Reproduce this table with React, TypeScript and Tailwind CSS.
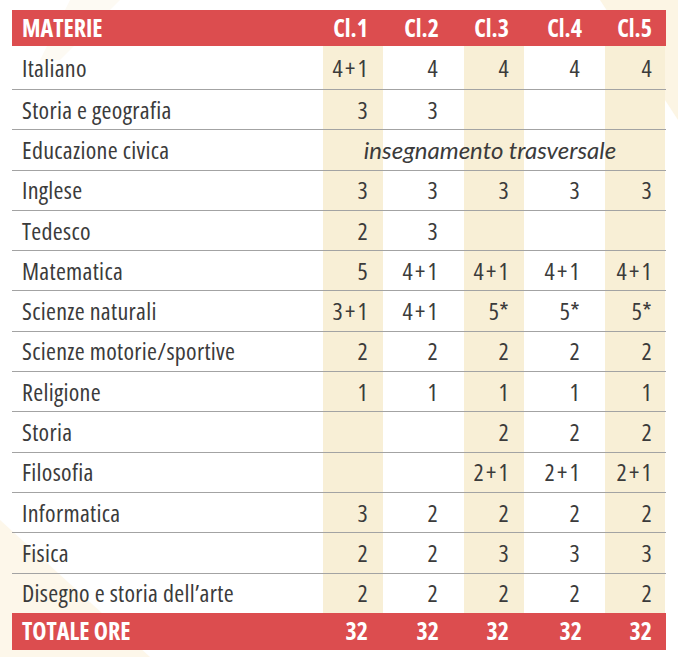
import React from "react";

type Row = { name: string; values: string[]; note?: string };

const rows: Row[] = [
  { name: "Italiano", values: ["4+1", "4", "4", "4", "4"] },
  { name: "Storia e geografia", values: ["3", "3", "", "", ""] },
  { name: "Educazione civica", values: ["", "", "", "", ""], note: "insegnamento trasversale" },
  { name: "Inglese", values: ["3", "3", "3", "3", "3"] },
  { name: "Tedesco", values: ["2", "3", "", "", ""] },
  { name: "Matematica", values: ["5", "4+1", "4+1", "4+1", "4+1"] },
  { name: "Scienze naturali", values: ["3+1", "4+1", "5*", "5*", "5*"] },
  { name: "Scienze motorie/sportive", values: ["2", "2", "2", "2", "2"] },
  { name: "Religione", values: ["1", "1", "1", "1", "1"] },
  { name: "Storia", values: ["", "", "2", "2", "2"] },
  { name: "Filosofia", values: ["", "", "2+1", "2+1", "2+1"] },
  { name: "Informatica", values: ["3", "2", "2", "2", "2"] },
  { name: "Fisica", values: ["2", "2", "3", "3", "3"] },
  { name: "Disegno e storia dell\u2019arte", values: ["2", "2", "2", "2", "2"] },
];

const cols = ["Cl.1", "Cl.2", "Cl.3", "Cl.4", "Cl.5"];

// beige on odd classes, right padding tuned per column
const cellClass = [
  "bg-[#f8efd6] pr-[15px]",
  "pr-[26px]",
  "bg-[#f8efd6] pr-[15px]",
  "pr-[25px]",
  "bg-[#f8efd6] pr-[13px]",
];
const headPad = ["pr-[15px]", "pr-[25px]", "pr-[15px]", "pr-[23px]", "pr-[13px]"];

const grid = "grid grid-cols-[311px_60px_81px_60px_81px_60px]";

function Hours({ v }: { v: string }) {
  const [a, b] = v.split("+");
  if (b === undefined) return <span>{v}</span>;
  return (
    <span>
      {a}
      <span className="mx-[2px]">+</span>
      {b}
    </span>
  );
}

export default function App() {
  return (
    <div
      className="relative h-[657px] w-[678px] overflow-hidden bg-white text-[#3b3b3b] [font-stretch:condensed]"
      style={{ fontFamily: '"Open Sans", "DejaVu Sans Condensed", sans-serif' }}
    >
      <svg className="absolute inset-0 h-full w-full" viewBox="0 0 678 657">
        <polygon points="600,0 678,0 678,120" fill="#fcf5e4" />
        <polygon points="0,520 0,657 150,657" fill="#fdf7ea" />
        <polygon points="70,0 120,0 60,60 40,60" fill="#fdfaf3" />
      </svg>

      <div className="relative px-[12px] pt-[10px]">
        <div className={`${grid} h-[36px] items-center bg-[#dc4d4f] text-[24px] font-bold text-white`}>
          <div className="pl-[10px]">MATERIE</div>
          {cols.map((c, i) => (
            <div key={c} className={`text-right ${headPad[i]}`}>
              {c}
            </div>
          ))}
        </div>

        {rows.map((r, idx) => (
          <div
            key={r.name}
            className={`${grid} text-[24px] tracking-[0.3px] ${idx === 0 ? "h-[43px]" : "h-[40.3px] border-t border-[#a3a3a3]"}`}
          >
            <div className="col-start-1 row-start-1 flex items-center pl-[10px]">{r.name}</div>
            {r.values.map((v, i) => (
              <div
                key={i}
                className={`row-start-1 flex items-center justify-end ${cellClass[i]}`}
                style={{ gridColumnStart: i + 2 }}
              >
                <Hours v={v} />
              </div>
            ))}
            {r.note ? (
              <div className="col-start-2 col-span-5 row-start-1 flex items-center justify-center pr-[8px] font-['Lato'] text-[24px] italic tracking-normal [font-stretch:normal]">
                {r.note}
              </div>
            ) : null}
          </div>
        ))}

        <div className={`${grid} h-[37px] items-center bg-[#dc4d4f] text-[24px] font-bold text-white`}>
          <div className="pl-[10px]">TOTALE ORE</div>
          {cols.map((c, i) => (
            <div key={c} className={`text-right ${headPad[i]}`}>
              32
            </div>
          ))}
        </div>
      </div>
    </div>
  );
}
